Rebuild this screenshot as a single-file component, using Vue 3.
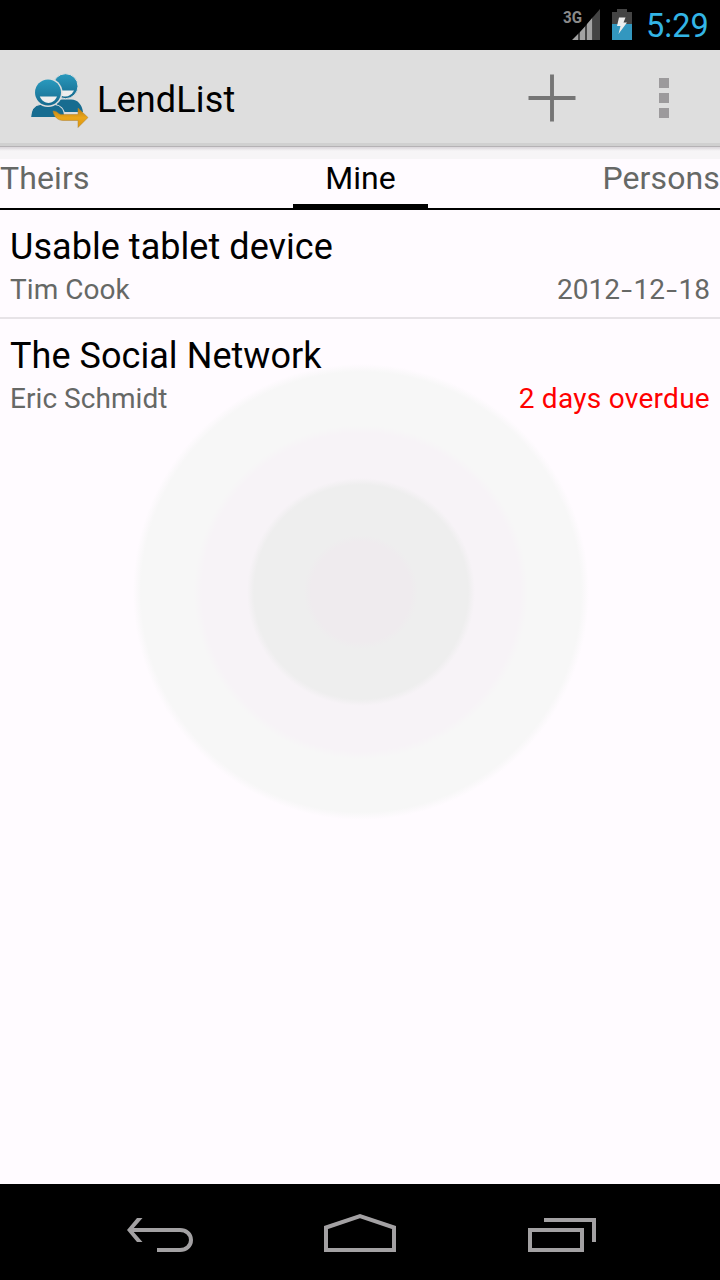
<script setup>
const tabs = [
  { name: 'Theirs', kind: 'left' },
  { name: 'Mine', kind: 'active' },
  { name: 'Persons', kind: 'right' },
]
const items = [
  { title: 'Usable tablet device', person: 'Tim Cook', due: ['2012', '-', '12', '-', '18'], overdue: false },
  { title: 'The Social Network', person: 'Eric Schmidt', due: ['2 days overdue'], overdue: true },
]
</script>

<template>
  <div class="screen">
    <header class="status">
      <svg class="status-icons" width="90" height="50" viewBox="0 0 90 50">
        <text x="13" y="23" class="net" textLength="19" lengthAdjust="spacingAndGlyphs">3G</text>
        <path d="M22 40L28 34V40Z M30 32L35 26.500V40H30Z M37 24L42.500 17.500V40H37Z" fill="#a3a3a3" />
        <path d="M44 16L50 9V40H44Z" fill="#444" />
        <path d="M28 34L30 32V40H28Z M35 26.500L37 24V40H35Z M42.500 17.500L44 16V40H42.500Z" fill="#444" />
        <path d="M67 9H77V12H82V24H62V12H67Z" fill="#444" />
        <path d="M62 24H82V40H62Z" fill="#3397bf" />
        <path d="M69 17.500H75.500L73.500 22.500H77L68.500 34L70.500 26H67Z" fill="#eee" />
      </svg>
      <span class="clock">5:29</span>
    </header>

    <div class="bar">
      <svg class="logo" width="64" height="60" viewBox="0 0 64 60">
        <defs>
          <linearGradient id="blue" x1="0" y1="0" x2="0" y2="1">
            <stop offset="0" stop-color="#2999bd" />
            <stop offset="1" stop-color="#166b8f" />
          </linearGradient>
          <linearGradient id="gold" x1="0" y1="0" x2="0" y2="1">
            <stop offset="0" stop-color="#b87d12" />
            <stop offset=".5" stop-color="#eba61a" />
            <stop offset="1" stop-color="#dc970f" />
          </linearGradient>
        </defs>
        <path d="M29 43V32C32 30 35 30.500 43 30.500C50 30.500 54 36 55 43Z" fill="#176c90" />
        <circle cx="37.500" cy="17.200" r="12.500" fill="url(#blue)" stroke="#dedede" stroke-width="1" />
        <path d="M27 21.500H46C43 27 39 28.500 34 27Z" fill="#eee" />
        <path d="M2.500 48.500C3 40 7 36 12 35.500H27C32 36 36.500 40 37 48.500Z" fill="#176c90" stroke="#dedede" stroke-width="1.200" />
        <circle cx="20" cy="23.500" r="14.500" fill="#dedede" />
        <circle cx="20" cy="23.500" r="13" fill="url(#blue)" />
        <path d="M11.800 27.500H29C25.500 36 15.500 36 11.800 27.500Z" fill="#eee" />
        <path d="M25 42C29 41.500 30 45.500 34 45.500H50V39L60 48.500L50 58.500V51.500H35C30 51.500 26 48 25 42Z" fill="url(#gold)" stroke="#ad8132" stroke-width=".5" />
      </svg>
      <h1 class="app-name">LendList</h1>
      <svg class="actions" width="220" height="96" viewBox="0 0 220 96">
        <path d="M28 48H76M52 24V72" stroke="#aaa" stroke-width="4" />
        <path d="M29 48H75M52 25V71" stroke="#757575" stroke-width="3.800" />
        <path d="M159 28h10v10h-10zM159 43h10v10h-10zM159 58h10v10h-10z" fill="#9c9a9c" />
      </svg>
    </div>

    <nav class="tabs">
      <span v-for="t in tabs" :key="t.name" class="tab" :class="t.kind">{{ t.name }}</span>
    </nav>

    <main class="list">
      <article v-for="i in items" :key="i.title" class="item">
        <div class="title">{{ i.title }}</div>
        <div class="meta">
          <span class="person">{{ i.person }}</span>
          <span class="due" :class="{ overdue: i.overdue }"><span v-for="(part, n) in i.due" :key="n" :class="{ dash: part === '-' }">{{ part }}</span></span>
        </div>
      </article>
    </main>

    <footer class="nav">
      <svg width="720" height="96" viewBox="0 0 720 96" fill="none" stroke="#a3a1a3" stroke-width="4">
        <path d="M130 46H180C186 46 191 50 191 56C191 62 186 66 180 66H157" />
        <path d="M127 46L137 34H142.500L132 46L142.500 58H137Z" fill="#a3a1a3" stroke="none" />
        <path d="M326 66V43.500L360 32L394 43.500V66Z" />
        <path d="M530 46H582V66H530Z M544 36H594V58" />
      </svg>
    </footer>
  </div>
</template>

<style>
body { margin: 0; background: #fffbff; }
</style>

<style scoped>
.screen {
  width: 720px;
  height: 1280px;
  display: flex;
  flex-direction: column;
  overflow: hidden;
  font-family: Roboto, "Noto Sans", sans-serif;
  color: #000;
  background: radial-gradient(circle at 361px 592px, #efebee 0 50px, #eee 57px 107px, #f7f3f7 114px 159px, #f7f7f7 167px 220px, #fffbff 228px);
}
.status { height: 50px; background: #000; display: flex; justify-content: flex-end; flex: none; }
.status-icons { flex: none; margin-right: 6px; }
.net { font: bold 17px Roboto, sans-serif; fill: #8a8a8a; }
.clock { width: 74px; font-size: 32.5px; line-height: 53px; color: #33b5e5; white-space: nowrap; }
.bar {
  height: 96px;
  flex: none;
  display: flex;
  background: linear-gradient(#dedede 0 93px, #d0d0d0 93px 96px);
}
.logo { margin: 19px 0 0 28px; flex: none; }
.app-name { margin: 0 auto 0 5px; font-weight: 400; font-size: 36px; letter-spacing: .15px; line-height: 101px; white-space: nowrap; }
.tabs {
  height: 64px;
  flex: none;
  box-sizing: border-box;
  border-bottom: 2px solid #000;
  display: grid;
  grid-template-columns: 293px 135px 292px;
  font-size: 32px;
  line-height: 64px;
  letter-spacing: .12px;
  color: #666866;
  background: linear-gradient(#b5b2b5 0 1px, #dedade 1px 2px, #e9e6e9 3px, #f7f5f7 5px 13px, #fffbff 13px);
}
.tab { white-space: nowrap; }
.right { text-align: right; }
.active { text-align: center; color: #000; border-bottom: 4px solid #000; height: 58px; letter-spacing: 0; }
.list { flex: 1; }
.item { height: 109px; box-sizing: border-box; padding: 14px 10px 0; }
.item:first-child { border-bottom: 2px solid #e7e3e7; }
.title { font-size: 36px; line-height: 46px; letter-spacing: .05px; white-space: nowrap; }
.meta { display: flex; justify-content: space-between; font-size: 28px; line-height: 40px; color: #666866; }
.person { letter-spacing: .06px; }
.dash { display: inline-block; width: 13.500px; text-align: center; transform: scaleX(1.4); }
.overdue { color: #f00; letter-spacing: .28px; }
.nav { height: 96px; flex: none; background: #000; }
.nav svg { display: block; }
</style>
